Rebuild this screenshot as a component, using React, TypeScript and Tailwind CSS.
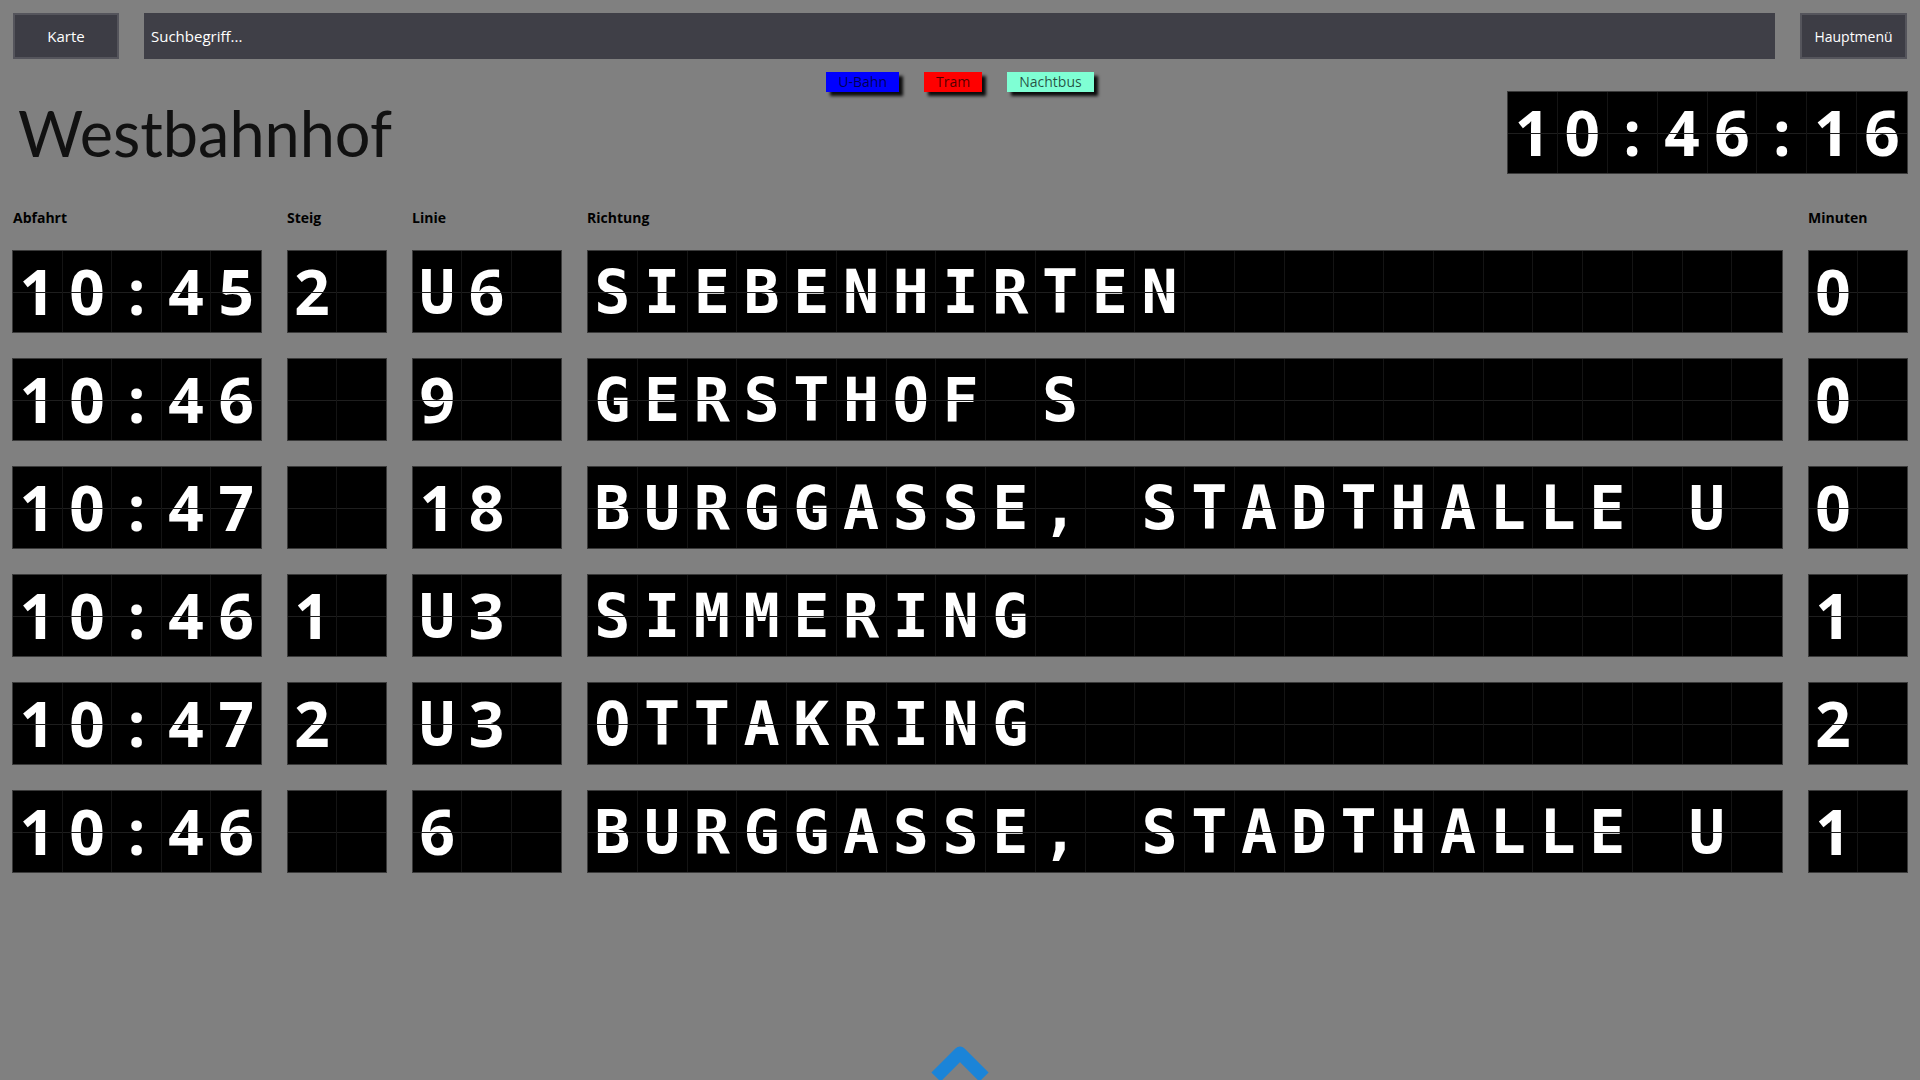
const departures = [
  { time: '10:45', platform: '2', line: 'U6', direction: 'SIEBENHIRTEN', minutes: '0' },
  { time: '10:46', platform: '', line: '9', direction: 'GERSTHOF S', minutes: '0' },
  { time: '10:47', platform: '', line: '18', direction: 'BURGGASSE, STADTHALLE U', minutes: '0' },
  { time: '10:46', platform: '1', line: 'U3', direction: 'SIMMERING', minutes: '1' },
  { time: '10:47', platform: '2', line: 'U3', direction: 'OTTAKRING', minutes: '2' },
  { time: '10:46', platform: '', line: '6', direction: 'BURGGASSE, STADTHALLE U', minutes: '1' },
];

const legend = [
  { name: 'U-Bahn', bg: 'bg-[#0000ff]' },
  { name: 'Tram', bg: 'bg-[#ff0000]' },
  { name: 'Nachtbus', bg: 'bg-[#7fffd4]' },
];

// one flap of the board, split across the middle
function Flap({ ch, last }: { ch: string; last: boolean }) {
  const digit = /[0-9:]/.test(ch);
  return (
    <div className={`relative flex items-center justify-center ${last ? '' : 'border-r border-[#141414]'}`}>
      {digit ? (
        <span className="font-['Open_Sans',sans-serif] text-[62px] font-bold leading-[1.2] text-white">{ch}</span>
      ) : (
        <span className="font-['DejaVu_Sans_Mono',monospace] text-[60px] font-bold leading-[1.2] text-white">
          {ch === ' ' ? '\u00a0' : ch}
        </span>
      )}
      <div className="absolute inset-x-0 top-1/2 h-px bg-[#1e1e1e]"></div>
    </div>
  );
}

function Board({ text, cells, className }: { text: string; cells: number; className: string }) {
  const chars = text.padEnd(cells, ' ').slice(0, cells).split('');
  return (
    <div
      className={`grid h-[83px] shrink-0 border border-[#3a3a3a] bg-black ${className}`}
      style={{ gridTemplateColumns: `repeat(${cells}, minmax(0, 1fr))` }}
    >
      {chars.map((c, i) => (
        <Flap key={i} ch={c} last={i === cells - 1} />
      ))}
    </div>
  );
}

export default function App() {
  return (
    <div className="flex h-screen w-full flex-col overflow-hidden bg-[#808080] font-['Open_Sans','Noto_Sans',sans-serif]">
      {/* top bar */}
      <div className="mt-[13px] flex h-[46px] shrink-0 gap-[25px] px-[13px]">
        <button className="w-[106px] border-2 border-[#55555c] bg-[#3d3d45] text-[15px] text-white">Karte</button>
        <div className="flex flex-1 items-center bg-[#3f3f47] px-[7px] text-[15px] text-white">Suchbegriff...</div>
        <button className="w-[107px] border-2 border-[#55555c] bg-[#3d3d45] text-[14px] text-white">Hauptmenü</button>
      </div>

      {/* legend */}
      <div className="mt-[13px] flex h-[20px] shrink-0 justify-center gap-[25px]">
        {legend.map((l) => (
          <div
            key={l.name}
            className={`flex items-center px-[12px] text-[14px] leading-none text-black/70 shadow-[4px_4px_3px_rgba(0,0,0,0.9)] ${l.bg}`}
          >
            {l.name}
          </div>
        ))}
      </div>

      {/* station + clock */}
      <div className="-mt-px flex shrink-0 items-center justify-between pl-[18px] pr-[12px]">
        <h1 className="font-['Lato',sans-serif] text-[63px] font-normal leading-none text-[#111]">Westbahnhof</h1>
        <Board text="10:46:16" cells={8} className="w-[401px]" />
      </div>

      {/* departure table */}
      <div className="mt-[33px] flex shrink-0 flex-col gap-[25px] px-[12px]">
        <div className="-mb-[3px] flex gap-[25px] text-[14px] font-bold text-black">
          <div className="w-[250px] pl-px">Abfahrt</div>
          <div className="w-[100px]">Steig</div>
          <div className="w-[150px]">Linie</div>
          <div className="flex-1">Richtung</div>
          <div className="w-[100px]">Minuten</div>
        </div>
        {departures.map((d, i) => (
          <div key={i} className="flex gap-[25px]">
            <Board text={d.time} cells={5} className="w-[250px]" />
            <Board text={d.platform} cells={2} className="w-[100px]" />
            <Board text={d.line} cells={3} className="w-[150px]" />
            <Board text={d.direction} cells={24} className="flex-1" />
            <Board text={d.minutes} cells={2} className="w-[100px]" />
          </div>
        ))}
      </div>

      {/* scroll up */}
      <div className="mt-[164px] flex shrink-0 justify-center">
        <svg width="64" height="50" viewBox="0 0 64 50">
          <polyline
            points="8,40 32,16 56,40"
            fill="none"
            stroke="#1b84d8"
            strokeWidth="13"
            strokeLinejoin="round"
          />
        </svg>
      </div>
    </div>
  );
}
